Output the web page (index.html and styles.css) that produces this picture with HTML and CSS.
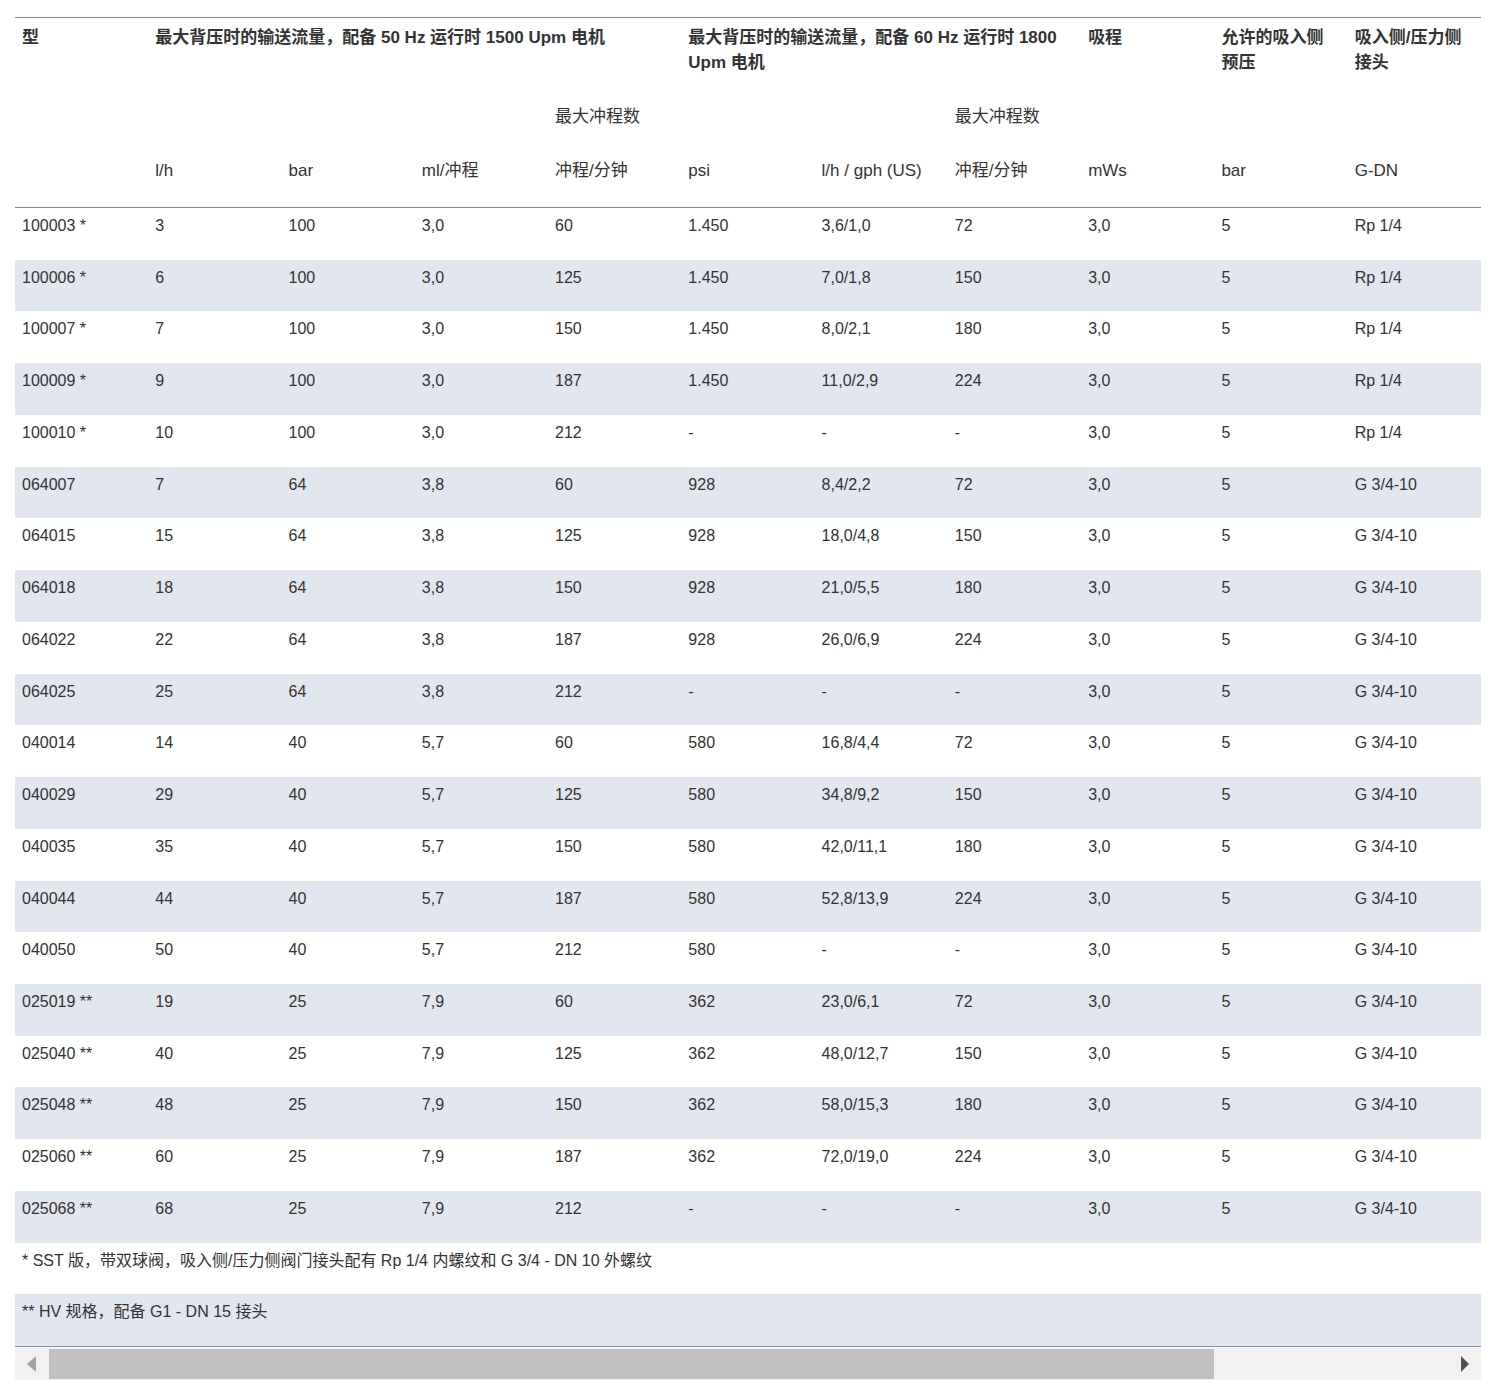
FILE: index.html
```html
<!DOCTYPE html>
<html lang="zh-CN">
<head>
<meta charset="utf-8">
<title>技术数据</title>
<link rel="stylesheet" href="styles.css">
</head>
<body>
<div class="table-wrap">
  <div class="scroller">
    <table class="spec">
      <colgroup>
        <col><col><col><col><col><col><col><col><col><col><col>
      </colgroup>
      <thead>
        <tr class="head">
          <th>型</th>
          <th colspan="4">最大背压时的输送流量，配备 50 Hz 运行时 1500 Upm 电机</th>
          <th colspan="3">最大背压时的输送流量，配备 60 Hz 运行时 1800 Upm 电机</th>
          <th>吸程</th>
          <th>允许的吸入侧预压</th>
          <th>吸入侧/压力侧接头</th>
        </tr>
        <tr class="sub">
          <td></td><td></td><td></td><td></td><td>最大冲程数</td><td></td><td></td><td>最大冲程数</td><td></td><td></td><td></td>
        </tr>
        <tr class="sub units">
          <td></td><td>l/h</td><td>bar</td><td>ml/冲程</td><td>冲程/分钟</td><td>psi</td><td>l/h / gph (US)</td><td>冲程/分钟</td><td>mWs</td><td>bar</td><td>G-DN</td>
        </tr>
      </thead>
      <tbody>
        <tr><td>100003 *</td><td>3</td><td>100</td><td>3,0</td><td>60</td><td>1.450</td><td>3,6/1,0</td><td>72</td><td>3,0</td><td>5</td><td>Rp 1/4</td></tr>
        <tr><td>100006 *</td><td>6</td><td>100</td><td>3,0</td><td>125</td><td>1.450</td><td>7,0/1,8</td><td>150</td><td>3,0</td><td>5</td><td>Rp 1/4</td></tr>
        <tr><td>100007 *</td><td>7</td><td>100</td><td>3,0</td><td>150</td><td>1.450</td><td>8,0/2,1</td><td>180</td><td>3,0</td><td>5</td><td>Rp 1/4</td></tr>
        <tr><td>100009 *</td><td>9</td><td>100</td><td>3,0</td><td>187</td><td>1.450</td><td>11,0/2,9</td><td>224</td><td>3,0</td><td>5</td><td>Rp 1/4</td></tr>
        <tr><td>100010 *</td><td>10</td><td>100</td><td>3,0</td><td>212</td><td>-</td><td>-</td><td>-</td><td>3,0</td><td>5</td><td>Rp 1/4</td></tr>
        <tr><td>064007</td><td>7</td><td>64</td><td>3,8</td><td>60</td><td>928</td><td>8,4/2,2</td><td>72</td><td>3,0</td><td>5</td><td>G 3/4-10</td></tr>
        <tr><td>064015</td><td>15</td><td>64</td><td>3,8</td><td>125</td><td>928</td><td>18,0/4,8</td><td>150</td><td>3,0</td><td>5</td><td>G 3/4-10</td></tr>
        <tr><td>064018</td><td>18</td><td>64</td><td>3,8</td><td>150</td><td>928</td><td>21,0/5,5</td><td>180</td><td>3,0</td><td>5</td><td>G 3/4-10</td></tr>
        <tr><td>064022</td><td>22</td><td>64</td><td>3,8</td><td>187</td><td>928</td><td>26,0/6,9</td><td>224</td><td>3,0</td><td>5</td><td>G 3/4-10</td></tr>
        <tr><td>064025</td><td>25</td><td>64</td><td>3,8</td><td>212</td><td>-</td><td>-</td><td>-</td><td>3,0</td><td>5</td><td>G 3/4-10</td></tr>
        <tr><td>040014</td><td>14</td><td>40</td><td>5,7</td><td>60</td><td>580</td><td>16,8/4,4</td><td>72</td><td>3,0</td><td>5</td><td>G 3/4-10</td></tr>
        <tr><td>040029</td><td>29</td><td>40</td><td>5,7</td><td>125</td><td>580</td><td>34,8/9,2</td><td>150</td><td>3,0</td><td>5</td><td>G 3/4-10</td></tr>
        <tr><td>040035</td><td>35</td><td>40</td><td>5,7</td><td>150</td><td>580</td><td>42,0/11,1</td><td>180</td><td>3,0</td><td>5</td><td>G 3/4-10</td></tr>
        <tr><td>040044</td><td>44</td><td>40</td><td>5,7</td><td>187</td><td>580</td><td>52,8/13,9</td><td>224</td><td>3,0</td><td>5</td><td>G 3/4-10</td></tr>
        <tr><td>040050</td><td>50</td><td>40</td><td>5,7</td><td>212</td><td>580</td><td>-</td><td>-</td><td>3,0</td><td>5</td><td>G 3/4-10</td></tr>
        <tr><td>025019 **</td><td>19</td><td>25</td><td>7,9</td><td>60</td><td>362</td><td>23,0/6,1</td><td>72</td><td>3,0</td><td>5</td><td>G 3/4-10</td></tr>
        <tr><td>025040 **</td><td>40</td><td>25</td><td>7,9</td><td>125</td><td>362</td><td>48,0/12,7</td><td>150</td><td>3,0</td><td>5</td><td>G 3/4-10</td></tr>
        <tr><td>025048 **</td><td>48</td><td>25</td><td>7,9</td><td>150</td><td>362</td><td>58,0/15,3</td><td>180</td><td>3,0</td><td>5</td><td>G 3/4-10</td></tr>
        <tr><td>025060 **</td><td>60</td><td>25</td><td>7,9</td><td>187</td><td>362</td><td>72,0/19,0</td><td>224</td><td>3,0</td><td>5</td><td>G 3/4-10</td></tr>
        <tr><td>025068 **</td><td>68</td><td>25</td><td>7,9</td><td>212</td><td>-</td><td>-</td><td>-</td><td>3,0</td><td>5</td><td>G 3/4-10</td></tr>
      </tbody>
      <tfoot>
        <tr><td colspan="11">* SST 版，带双球阀，吸入侧/压力侧阀门接头配有 Rp 1/4 内螺纹和 G 3/4 - DN 10 外螺纹</td></tr>
        <tr><td colspan="11">** HV 规格，配备 G1 - DN 15 接头</td></tr>
      </tfoot>
    </table>
  </div>
  <div class="scrollbar" aria-hidden="true">
    <div class="sb-btn"><span class="arrow-left"></span></div>
    <div class="sb-track"><div class="sb-thumb"></div></div>
    <div class="sb-btn"><span class="arrow-right"></span></div>
  </div>
</div>
</body>
</html>
```

FILE: styles.css
```css
html, body {
  margin: 0;
  padding: 0;
  background: #ffffff;
}

body {
  font-family: "Liberation Sans", "Noto Sans CJK SC", sans-serif;
  color: #333333;
}

.table-wrap {
  width: 1466px;
  margin: 17px 0 0 15px;
}

.scroller {
  overflow: hidden;
}

.spec {
  width: 100%;
  table-layout: fixed;
  border-collapse: collapse;
  border-top: 1px solid #7d8ea1;
  border-bottom: 1px solid #7b90b0;
}

.spec col {
  width: 9.0909%;
}

.spec th,
.spec td {
  text-align: left;
  vertical-align: top;
}

.spec thead th,
.spec thead td {
  font-size: 17px;
  line-height: 25px;
  padding: 6px 12px 23px 7px;
}

.spec thead .head th {
  font-weight: bold;
  padding-top: 7px;
}

.spec thead .units td {
  padding-bottom: 24px;
}

.spec thead tr:last-child {
  border-bottom: 1px solid #7d8ea1;
}

.spec tbody td,
.spec tfoot td {
  font-size: 16px;
  line-height: 25.74px;
  padding: 5px 12px 21px 7px;
  white-space: nowrap;
}

.spec tbody tr:nth-child(even) {
  background: #e2e6ef;
}

.spec tfoot tr:nth-child(even) {
  background: #e2e6ef;
}

.scrollbar {
  display: flex;
  height: 32px;
  margin-top: 1px;
  background: #f1f1f1;
}

.sb-btn {
  width: 32px;
  flex: 0 0 32px;
  display: flex;
  align-items: center;
  justify-content: center;
}

.sb-track {
  flex: 1;
  padding: 1px 0 1px 2px;
  display: flex;
}

.sb-thumb {
  width: 1165px;
  background: #c1c1c1;
}

.arrow-left {
  width: 0;
  height: 0;
  border-top: 8px solid transparent;
  border-bottom: 8px solid transparent;
  border-right: 9px solid #a3a3a3;
}

.arrow-right {
  width: 0;
  height: 0;
  border-top: 8px solid transparent;
  border-bottom: 8px solid transparent;
  border-left: 8px solid #505050;
}
```
